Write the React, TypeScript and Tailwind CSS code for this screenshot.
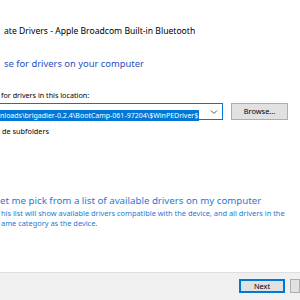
import React from "react";

export default function App() {
  const font = { fontFamily: '"Segoe UI", "Noto Sans", "Open Sans", sans-serif' };
  return (
    <div
      className="w-[300px] h-[300px] bg-white flex flex-col overflow-hidden text-black"
      style={font}
    >
      <div className="flex-1 flex flex-col">
        <div className="pt-[25px] pl-[4px] text-[8.6px] leading-[12px] whitespace-nowrap">
          ate Drivers - Apple Broadcom Built-in Bluetooth
        </div>
        <div className="mt-[20px] pl-[4px] text-[9.4px] leading-[14px] text-[#1f4fbf] whitespace-nowrap">
          se for drivers on your computer
        </div>
        <div className="mt-[18px] pl-[1px] text-[7.2px] leading-[12px] whitespace-nowrap">
          for drivers in this location:
        </div>
        <div className="mt-[2px] flex items-center">
          <div className="w-[223px] h-[17px] border border-[#0078d7] border-l-0 flex items-center pr-[3px]">
            <div className="flex-1 overflow-hidden whitespace-nowrap">
              <span className="bg-[#0078d7] text-white text-[7px] leading-[11px] pr-[1px] inline-block">
                nloads\brigadier-0.2.4\BootCamp-061-97204\$WinPEDriver$
              </span>
            </div>
            <svg width="8" height="6" viewBox="0 0 8 6" className="ml-[3px] mr-[1px]">
              <path d="M1 1.5 L4 4.5 L7 1.5" fill="none" stroke="#555" strokeWidth="1" />
            </svg>
          </div>
          <div className="ml-[8px] w-[57px] h-[17px] bg-[#e1e1e1] border border-[#adadad] flex items-center justify-center text-[7.4px]">
            Browse...
          </div>
        </div>
        <div className="mt-[5px] pl-[2px] text-[7.3px] leading-[12px] whitespace-nowrap">
          de subfolders
        </div>
        <div className="mt-[57px] pl-[0px] text-[9.7px] leading-[14px] text-[#1a7ad6] whitespace-nowrap">
          et me pick from a list of available drivers on my computer
        </div>
        <div className="pl-[1px] text-[7.4px] leading-[10px] text-[#1a7ad6] whitespace-nowrap">
          <div>his list will show available drivers compatible with the device, and all drivers in the</div>
          <div>ame category as the device.</div>
        </div>
      </div>
      <div className="h-[28px] bg-[#f0f0f0] border-t border-[#dfdfdf] flex items-start justify-end pt-[6px]">
        <div className="w-[46px] h-[14px] border border-[#0078d7] bg-[#e1e1e1] flex items-center justify-center text-[7.4px] leading-[10px] shadow-[inset_0_0_0_1px_#0078d7]">
          Next
        </div>
        <div className="ml-[5px] w-[10px] h-[14px] border border-[#adadad] bg-[#e1e1e1]" />
      </div>
    </div>
  );
}
